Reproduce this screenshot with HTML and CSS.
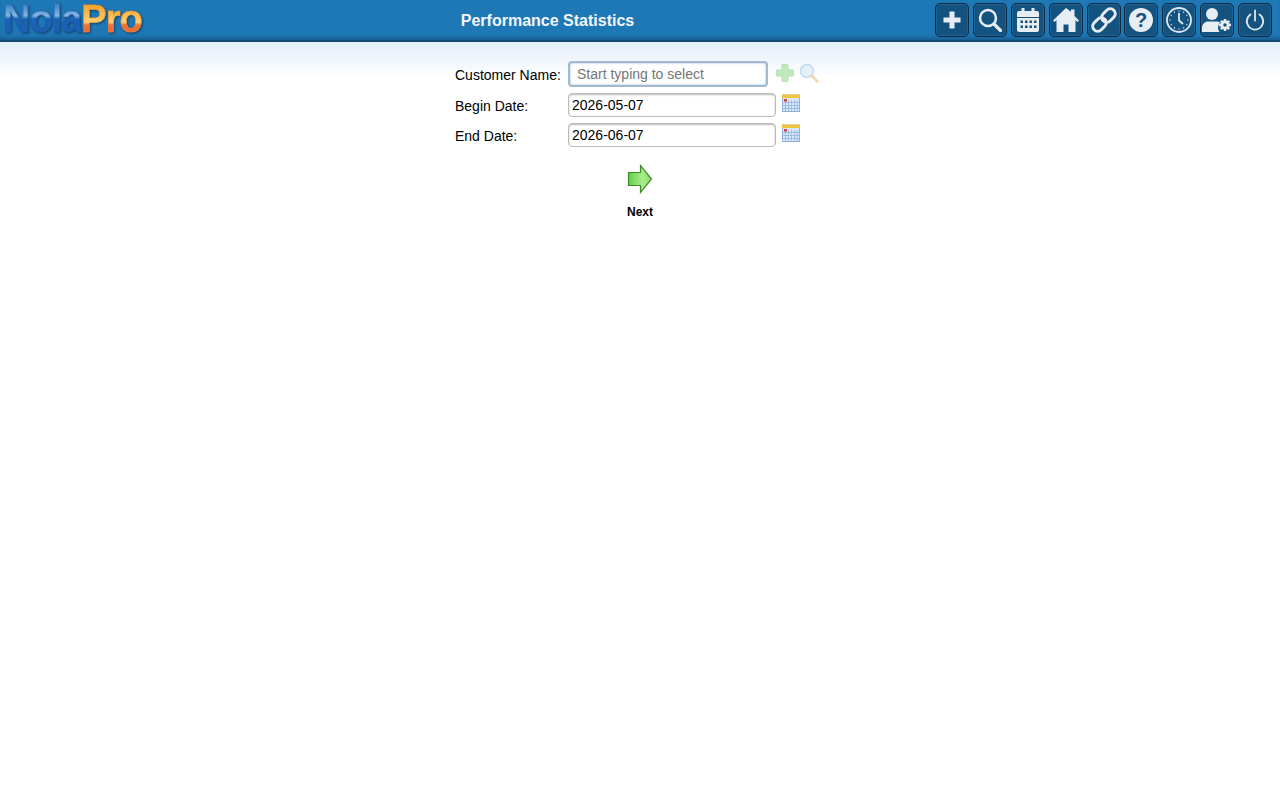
FILE: index.html
```html
<html lang="en">
<head>
  <meta charset="UTF-8">
  <meta name="viewport" content="width=device-width, initial-scale=1.0">
  <title>Performance Statistics</title>
  <link rel="stylesheet" href="styles.css">
</head>
<body>
  <div class="header">
    <div class="logo"><span class="logo-nola">Nola</span><span class="logo-pro">Pro</span></div>
    <div class="title">Performance Statistics</div>
    <div class="toolbar">
      <a class="tool"><svg viewBox="0 0 24 24"><path d="M9.500 3.500h5v6h6v5h-6v6h-5v-6h-6v-5h6z"/></svg></a>
      <a class="tool"><svg viewBox="0 0 24 24"><circle class="line" cx="10" cy="10" r="8"/><path class="line round" d="M16 16l6.500 6.500"/></svg></a>
      <a class="tool"><svg viewBox="0 0 24 24"><path fill-rule="evenodd" d="M5.500 0h3v3h7V0h3v3H21a2 2 0 0 1 2 2v4H1V5a2 2 0 0 1 2-2h2.500zM1 10h22v12a2 2 0 0 1-2 2H3a2 2 0 0 1-2-2zm3.500 2.500v2.500H7v-2.500zm4.500 0v2.500h2.500v-2.500zm4.500 0v2.500H16v-2.500zm4.500 0v2.500h2.500v-2.500zM4.500 17.500V20H7v-2.500zm4.500 0V20h2.500v-2.500zm4.500 0V20H16v-2.500zm4.500 0V20h2.500v-2.500z"/></svg></a>
      <a class="tool"><svg class="big" viewBox="0 0 26 24"><path d="M13 0 0 12.500l1.500 1.500L3.500 12.200V24h7v-7.500h5V24h7V12.200l2 1.800 1.500-1.500L21.500 8V1.500h-3.500v2.200z"/></svg></a>
      <a class="tool"><svg class="big" viewBox="0 0 26 26"><g class="chain"><rect x="1" y="12.500" width="15" height="10" rx="5" transform="rotate(-45 8.500 17.500)"/><rect x="10" y="3.500" width="15" height="10" rx="5" transform="rotate(-45 17.500 8.500)"/></g></svg></a>
      <a class="tool"><svg viewBox="0 0 24 24"><circle cx="12" cy="12" r="12"/><text class="mark" x="12" y="19">?</text></svg></a>
      <a class="tool"><svg class="big" viewBox="0 0 26 26"><circle class="thin" cx="13" cy="13" r="12"/><path class="thin" d="M13 6v7.500l4 3.500"/><path class="dots" d="M13 3.500v1M22.500 13h-1M13 22.500v-1M3.500 13h1M17.800 4.700l-.5.9M21.300 8.200l-.9.500M21.300 17.800l-.9-.5M8.200 21.300l.5-.9M4.700 17.800l.9-.5M4.700 8.200l.9.500M8.200 4.700l.5.9M17.800 21.300l-.5-.9"/></svg></a>
      <a class="tool"><svg class="wide" viewBox="0 0 30 26"><circle cx="10" cy="7" r="6"/><path d="M0 25v-4c0-4 3-6.500 6-6.500h8c1.500 0 3 .3 4 1-2.500 3-2.500 6.500-.5 9.500z"/><circle class="gear" cx="23" cy="18" r="3.200"/><path class="gear-teeth" d="M23 12v2M23 22v2M17 18h2M27 18h2M18.800 13.800l1.400 1.400M25.800 20.800l1.400 1.400M18.800 22.200l1.400-1.400M25.800 15.200l1.400-1.400"/></svg></a>
      <a class="tool"><svg viewBox="0 0 24 24"><path class="power" d="M7.500 6.500a8.200 8.200 0 1 0 9 0"/><path class="power" d="M12 2.500V12.500"/></svg></a>
    </div>
  </div>

  <div class="page">
    <form class="stats-form">
      <div class="form-row first">
        <label>Customer Name:</label>
        <input class="customer" type="text" placeholder="Start typing to select">
        <span class="row-icons faded">
          <svg width="20" height="20" viewBox="0 0 20 20"><path d="M7.500 1.500h5a.5.5 0 0 1 .5.500v5h5a.5.5 0 0 1 .5.500v5a.5.5 0 0 1-.5.500h-5v5a.5.5 0 0 1-.5.500h-5a.5.5 0 0 1-.5-.5v-5H2a.5.5 0 0 1-.5-.5v-5A.5.5 0 0 1 2 7h5V2a.5.5 0 0 1 .5-.5z" fill="#a9e2a0" stroke="#98d690"/></svg>
          <svg width="20" height="20" viewBox="0 0 20 20"><circle cx="8" cy="8" r="6.500" fill="#dcecf8" stroke="#a9cfe6" stroke-width="1.500"/><path d="m12.500 12.500 6 6" stroke="#f0c78a" stroke-width="2.500" stroke-linecap="round"/></svg>
        </span>
      </div>
      <div class="form-row">
        <label>Begin Date:</label>
        <input class="date" type="text" value="2026-05-07">
        <span class="row-icons">
          <svg width="18" height="18" viewBox="0 0 18 18"><use href="#cal"/></svg>
        </span>
      </div>
      <div class="form-row">
        <label>End Date:</label>
        <input class="date" type="text" value="2026-06-07">
        <span class="row-icons">
          <svg width="18" height="18" viewBox="0 0 18 18"><use href="#cal"/></svg>
        </span>
      </div>
      <div class="next">
        <svg width="26" height="30" viewBox="0 0 26 30">
          <defs><linearGradient id="arrow" x1="0" y1="0" x2="1" y2="0"><stop offset="0" stop-color="#62cc48"/><stop offset="0.6" stop-color="#a8ee8c"/><stop offset="1" stop-color="#8fdc6e"/></linearGradient></defs>
          <path d="M1.500 8.500h12V1.500L24.500 15 13.500 28.500v-7h-12z" fill="url(#arrow)" stroke="#3f8a2c" stroke-width="1.200"/>
        </svg>
        <div class="next-label">Next</div>
      </div>
    </form>
  </div>

  <svg class="defs" width="0" height="0">
    <symbol id="cal" viewBox="0 0 18 18">
      <rect x="0.500" y="1" width="17" height="16.500" fill="#dbe8f8" stroke="#8fb0d8"/>
      <rect x="0" y="0.500" width="18" height="3.500" fill="#f0c440"/>
      <path d="M3.500 6v11M6.500 6v11M9.500 6v11M12.500 6v11M15 6v11M1 8.500h16M1 11.500h16M1 14.500h16" stroke="#8fb4e4" stroke-width="0.800"/>
      <rect x="2" y="5" width="3" height="2.500" fill="#d0453a"/>
    </symbol>
  </svg>
</body>
</html>
```
FILE: styles.css
```css
body {
  margin: 0;
  font-family: "Liberation Sans", Arial, sans-serif;
  font-size: 14px;
  color: #000;
  background: #fff;
}

.header {
  display: flex;
  align-items: center;
  height: 40px;
  background: #1f78b6;
  border-bottom: 2px solid #134a70;
  box-shadow: inset 0 -4px 4px -2px #16598a;
}

.logo {
  width: 160px;
  padding-left: 3px;
  padding-bottom: 2px;
  box-sizing: border-box;
  font-size: 38px;
  font-weight: bold;
  line-height: 38px;
  letter-spacing: -1px;
  white-space: nowrap;
  filter: drop-shadow(1px 1px 1px rgba(10, 40, 70, 0.7));
}

.logo-nola,
.logo-pro {
  -webkit-background-clip: text;
  background-clip: text;
  color: transparent;
  -webkit-text-stroke-width: 0.6px;
}

.logo-nola {
  background-image: linear-gradient(to bottom, #4a8ccb 20%, #84b5e2 42%, #1a62b8 50%, #1d5fb0 85%);
  -webkit-text-stroke-color: rgba(29, 95, 176, 0.7);
}

.logo-pro {
  background-image: linear-gradient(to bottom, #f8a830 20%, #fbcf70 58%, #f2713a 64%, #ea6a35 85%);
  -webkit-text-stroke-color: rgba(240, 140, 50, 0.7);
}

.title {
  flex: 1;
  padding-top: 1px;
  text-align: center;
  color: #f2f7fb;
  font-size: 16px;
  font-weight: bold;
}

.toolbar {
  display: flex;
  gap: 3.875px;
  padding-right: 8px;
}

.tool {
  display: flex;
  align-items: center;
  justify-content: center;
  width: 32px;
  height: 32px;
  border: 1px solid #0d2a42;
  border-radius: 5px;
  background: #14527f;
  box-shadow: inset 0 0 0 1px #1d6497;
}

.tool svg {
  width: 24px;
  height: 24px;
  fill: #e6eef4;
}

.tool svg.big {
  width: 26px;
  height: 26px;
}

.tool svg.wide {
  flex: none;
  width: 30px;
  height: 26px;
}

.tool .line {
  fill: none;
  stroke: #e6eef4;
  stroke-width: 2.500;
}

.tool .round {
  stroke-width: 3.200;
  stroke-linecap: round;
}

.tool .chain rect {
  fill: none;
  stroke: #e6eef4;
  stroke-width: 3;
}

.tool .mark {
  fill: #14527f;
  font-size: 20px;
  font-weight: bold;
  text-anchor: middle;
}

.tool .thin {
  fill: none;
  stroke: #dce8f1;
  stroke-width: 1.800;
}

.tool .dots {
  fill: none;
  stroke: #dce8f1;
  stroke-width: 1.400;
}

.tool .gear {
  fill: none;
  stroke: #e6eef4;
  stroke-width: 3;
}

.tool .gear-teeth {
  fill: none;
  stroke: #e6eef4;
  stroke-width: 2.400;
}

.tool .power {
  fill: none;
  stroke: #dce8f1;
  stroke-width: 1.800;
  stroke-linecap: round;
}

.page {
  min-height: 758px;
  background: linear-gradient(to bottom, #e3eef8 0, #ffffff 36px);
}

.stats-form {
  width: 370px;
  margin: 0 auto;
  padding-top: 19px;
}

.form-row {
  display: flex;
  align-items: center;
  margin-top: 6px;
}

.form-row.first {
  margin-top: 0;
}

.form-row label {
  width: 113px;
  padding-top: 2px;
}

.form-row input {
  box-sizing: border-box;
  font-family: "Liberation Sans", Arial, sans-serif;
  font-size: 14px;
  color: #000;
  outline: none;
  background: #fff;
}

.customer {
  width: 200px;
  height: 26px;
  padding: 0 7px;
  border: 2px solid #a3b9cf;
  border-radius: 4px;
  box-shadow: inset 0 0 2px #7fa3c4;
}

.customer::placeholder {
  color: #757575;
}

.date {
  width: 208px;
  height: 24px;
  padding: 0 3px;
  border: 1px solid #bcbcbc;
  border-radius: 4px;
  box-shadow: inset 0 1px 2px #b8b8b8;
}

.row-icons {
  display: flex;
  gap: 4px;
  margin-left: 6px;
  margin-bottom: 5px;
}

.faded {
  margin-left: 7px;
  margin-bottom: 2px;
  opacity: 0.7;
}

.next {
  margin-top: 17px;
  text-align: center;
}

.next svg {
  display: block;
  margin: 0 auto;
}

.next-label {
  margin-top: 11px;
  font-size: 12px;
  font-weight: bold;
}

.defs {
  position: absolute;
}
```
